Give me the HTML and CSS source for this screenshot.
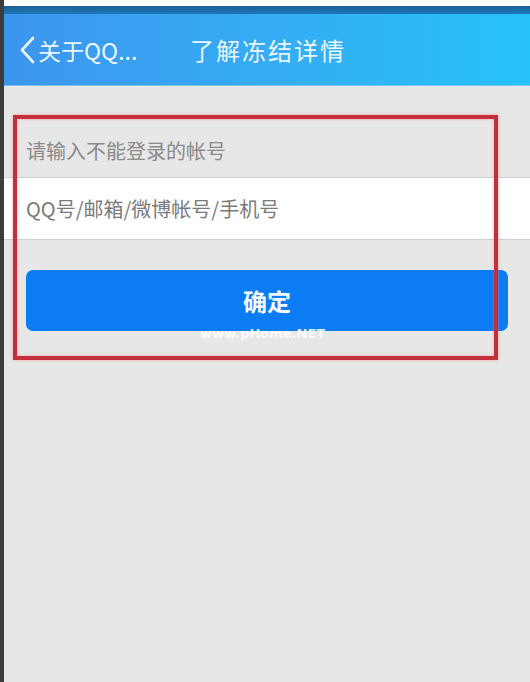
FILE: index.html
```html
<!DOCTYPE html>
<html lang="zh-CN">
<head>
    <meta charset="UTF-8">
    <meta name="viewport" content="width=device-width, initial-scale=1.0">
    <title>了解冻结详情</title>
    <link rel="stylesheet" href="styles.css">
</head>
<body>
    <div class="phone">
        <div class="status-bar"></div>

        <div class="header">
            <a class="back" href="#">
                <svg class="back-icon" width="18" height="28" viewBox="0 0 18 28">
                    <path d="M15 2 L4 14 L15 26" fill="none" stroke="#e8f4ff" stroke-width="2.6" stroke-linecap="round" stroke-linejoin="round"/>
                </svg>
                <span>关于QQ...</span>
            </a>
            <h1>了解冻结详情</h1>
        </div>

        <div class="form">
            <div class="form-label">请输入不能登录的帐号</div>
            <div class="input-row">
                <input type="text" placeholder="QQ号/邮箱/微博帐号/手机号">
            </div>
            <div class="actions">
                <button class="submit-btn">确定</button>
            </div>

            <div class="highlight"></div>
            <div class="watermark">www.pHome.NET</div>
        </div>
    </div>
</body>
</html>
```

FILE: styles.css
```css
* {
    margin: 0;
    padding: 0;
    box-sizing: border-box;
}

body {
    font-family: "Noto Sans CJK SC", "Noto Sans", sans-serif;
    background: #e7e7e7;
}

.phone {
    min-height: 682px;
    border-left: 4px solid #3c3c3c;
    background: #e7e7e7;
}

.status-bar {
    height: 14px;
    background: linear-gradient(to bottom, #ffffff 0, #ffffff 6px, #1c5f96 6px, #1d78b8 14px);
}

.header {
    height: 72px;
    display: flex;
    align-items: center;
    background: linear-gradient(90deg, #3d95ee 0%, #35acf4 50%, #27c2f9 100%);
    border-bottom: 1px solid #7cc6ee;
}

.back {
    display: flex;
    align-items: center;
    gap: 2px;
    padding-left: 14px;
    width: 186px;
    color: #eaf6ff;
    text-decoration: none;
    font-size: 23px;
}

.back-icon {
    flex-shrink: 0;
}

.header h1 {
    color: #eaf6ff;
    font-size: 24px;
    font-weight: 400;
    letter-spacing: 2px;
}

.form {
    position: relative;
}

.form-label {
    height: 92px;
    display: flex;
    align-items: flex-end;
    padding: 0 0 12px 22px;
    color: #8a8a8a;
    font-size: 20px;
    border-bottom: 1px solid #cfcfcf;
}

.input-row {
    height: 62px;
    display: flex;
    align-items: center;
    background: #ffffff;
    border-bottom: 1px solid #cfcfcf;
}

.input-row input {
    width: 100%;
    height: 100%;
    border: none;
    outline: none;
    background: transparent;
    padding: 0 22px;
    font-family: inherit;
    font-size: 20px;
    color: #333;
}

.input-row input::placeholder {
    color: #7a7a7a;
}

.actions {
    padding: 30px 22px 0 22px;
}

.submit-btn {
    width: 100%;
    height: 61px;
    border: none;
    border-radius: 7px;
    background: #0b7cf4;
    color: #f4faff;
    font-family: inherit;
    font-size: 24px;
    font-weight: 700;
    cursor: pointer;
}

/* red annotation frame drawn over the form */
.highlight {
    position: absolute;
    left: 9px;
    top: 29px;
    width: 485px;
    height: 245px;
    border: 4px solid #c3303b;
    box-shadow: 0 0 3px rgba(255, 110, 110, 0.6), inset 0 0 3px rgba(255, 110, 110, 0.6);
    pointer-events: none;
}

.watermark {
    position: absolute;
    left: 196px;
    top: 240px;
    color: rgba(255, 255, 255, 0.85);
    font-family: "DejaVu Sans", sans-serif;
    font-size: 13px;
    font-weight: 700;
    pointer-events: none;
}
```
